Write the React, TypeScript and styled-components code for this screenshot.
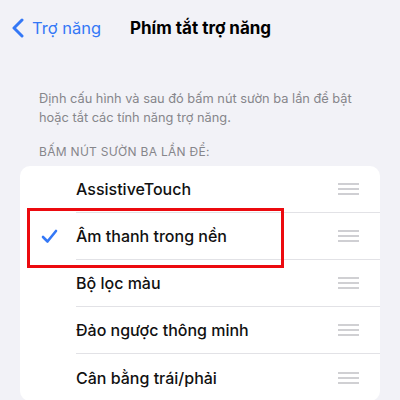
import React from "react";
import styled, { createGlobalStyle } from "styled-components";

const GlobalStyle = createGlobalStyle`
  body {
    margin: 0;
    background: #f2f2f7;
    font-family: Inter, "Noto Sans", sans-serif;
    -webkit-font-smoothing: antialiased;
  }
  * {
    box-sizing: border-box;
  }
`;

const Screen = styled.div`
  width: 400px;
  height: 400px;
  overflow: hidden;
  background: #f2f2f7;
  position: relative;
`;

const NavBar = styled.div`
  height: 56px;
  display: flex;
  align-items: center;
  padding-left: 12px;
`;

const BackButton = styled.div`
  display: flex;
  align-items: center;
  gap: 8px;
  color: #3478f6;
  font-size: 16.5px;
  width: 118px;
`;

const Title = styled.div`
  font-size: 17px;
  font-weight: 700;
  color: #000;
`;

const Description = styled.p`
  margin: 33px 0 0;
  padding: 0 40px 0 39px;
  font-size: 12.8px;
  line-height: 19px;
  color: #86868b;
`;

const SectionHeader = styled.div`
  margin: 17px 0 0;
  padding-left: 39px;
  font-size: 12px;
  letter-spacing: 0.3px;
  color: #86868b;
  text-transform: uppercase;
`;

const Card = styled.div`
  margin: 7px 20px 0;
  background: #fff;
  border-radius: 10px;
`;

const Row = styled.div`
  height: 47px;
  display: flex;
  align-items: center;
`;

const CheckSlot = styled.div`
  width: 56px;
  display: flex;
  justify-content: center;
  padding-left: 2px;
`;

const RowBody = styled.div<{ $last?: boolean }>`
  flex: 1;
  height: 100%;
  display: flex;
  align-items: center;
  justify-content: space-between;
  padding-right: 21px;
  border-bottom: ${(p) => (p.$last ? "none" : "1px solid #e2e2e6")};
`;

const Label = styled.span`
  font-size: 16px;
  font-weight: 500;
  color: #111;
`;

const Highlight = styled.div`
  position: absolute;
  left: 27px;
  top: 208px;
  width: 257px;
  height: 60px;
  border: 3px solid #ec0a0f;
`;

const Chevron = () => (
  <svg width="12" height="20" viewBox="0 0 12 20">
    <path
      d="M10 2 L2 10 L10 18"
      fill="none"
      stroke="#3478f6"
      strokeWidth="3"
      strokeLinecap="round"
      strokeLinejoin="round"
    />
  </svg>
);

const Check = () => (
  <svg width="17" height="15" viewBox="0 0 17 15">
    <path
      d="M2 8 L6.5 12.5 L15 2"
      fill="none"
      stroke="#3478f6"
      strokeWidth="2.6"
      strokeLinecap="round"
      strokeLinejoin="round"
    />
  </svg>
);

const Grabber = () => (
  <svg width="21" height="12" viewBox="0 0 21 12">
    <g stroke="#c4c4c8" strokeWidth="1.6">
      <line x1="0" y1="1" x2="21" y2="1" />
      <line x1="0" y1="6" x2="21" y2="6" />
      <line x1="0" y1="11" x2="21" y2="11" />
    </g>
  </svg>
);

const items = [
  { label: "AssistiveTouch", checked: false },
  { label: "Âm thanh trong nền", checked: true },
  { label: "Bộ lọc màu", checked: false },
  { label: "Đảo ngược thông minh", checked: false },
  { label: "Cân bằng trái/phải", checked: false },
];

const App = () => {
  return (
    <Screen>
      <GlobalStyle />
      <NavBar>
        <BackButton>
          <Chevron />
          Trợ năng
        </BackButton>
        <Title>Phím tắt trợ năng</Title>
      </NavBar>
      <Description>
        Định cấu hình và sau đó bấm nút sườn ba lần để bật hoặc tắt các tính
        năng trợ năng.
      </Description>
      <SectionHeader>Bấm nút sườn ba lần để:</SectionHeader>
      <Card>
        {items.map((item, i) => (
          <Row key={item.label}>
            <CheckSlot>{item.checked && <Check />}</CheckSlot>
            <RowBody $last={i === items.length - 1}>
              <Label>{item.label}</Label>
              <Grabber />
            </RowBody>
          </Row>
        ))}
      </Card>
      <Highlight />
    </Screen>
  );
};

export default App;
